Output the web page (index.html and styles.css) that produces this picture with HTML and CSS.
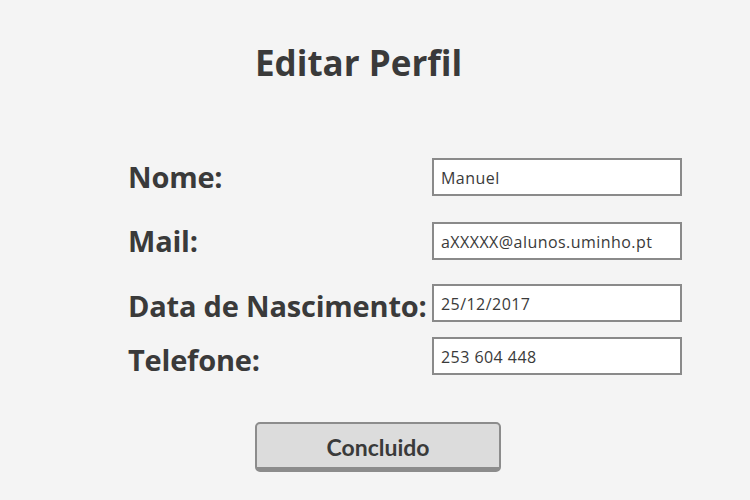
FILE: index.html
```html
<!DOCTYPE html>
<html lang="pt">
<head>
<meta charset="utf-8">
<title>Editar Perfil</title>
<link rel="stylesheet" href="styles.css">
</head>
<body>
<main class="page">
  <h1 class="title">Editar Perfil</h1>
  <form class="form">
    <div class="row row-nome">
      <label class="label" for="nome">Nome:</label>
      <input class="field" id="nome" type="text" value="Manuel">
    </div>
    <div class="row row-mail">
      <label class="label" for="mail">Mail:</label>
      <input class="field" id="mail" type="text" value="aXXXXX@alunos.uminho.pt">
    </div>
    <div class="row row-data">
      <label class="label" for="data">Data de Nascimento:</label>
      <input class="field" id="data" type="text" value="25/12/2017">
    </div>
    <div class="row row-tel">
      <label class="label" for="tel">Telefone:</label>
      <input class="field" id="tel" type="text" value="253 604 448">
    </div>
    <div class="actions">
      <button class="btn" type="button">Concluido</button>
    </div>
  </form>
</main>
</body>
</html>
```

FILE: styles.css
```css
html, body {
  margin: 0;
  padding: 0;
  background: #f4f4f4;
}
body {
  width: 750px;
  height: 500px;
  overflow: hidden;
  font-family: "Open Sans", Lato, sans-serif;
  color: #3a3a3a;
}
.page {
  display: flex;
  flex-direction: column;
}
.title {
  margin: 41px 0 0 255px;
  font-size: 35px;
  font-weight: 700;
  line-height: 44px;
  height: 44px;
  letter-spacing: 0;
}
.form {
  display: flex;
  flex-direction: column;
  margin: 73px 0 0 128px;
}
.row {
  display: grid;
  grid-template-columns: 304px 250px;
  grid-template-rows: 38px;
  align-items: center;
  height: 38px;
}
.row-mail { margin-top: 26px; }
.row-data { margin-top: 24px; }
.row-tel { margin-top: 15px; }
.label {
  font-size: 29px;
  font-weight: 700;
  line-height: 38px;
  white-space: nowrap;
  letter-spacing: -0.2px;
}
.row-data .label { align-self: end; line-height: 32px; }
.row-tel .label { align-self: end; line-height: 30px; }
.field {
  box-sizing: border-box;
  width: 250px;
  height: 38px;
  border: 2px solid #8a8a8a;
  background: #ffffff;
  padding: 1px 0 0 7px;
  font-family: "Open Sans", sans-serif;
  font-size: 16px;
  font-weight: 500;
  letter-spacing: 0.45px;
  color: #3a3a3a;
  outline: none;
}
.actions {
  margin: 47px 0 0 127px;
}
.btn {
  box-sizing: border-box;
  width: 246px;
  height: 50px;
  background: #dcdcdc;
  border: 2px solid #8c8c8c;
  border-bottom-width: 5px;
  border-radius: 5px;
  font-family: Lato, "Open Sans", sans-serif;
  font-size: 23px;
  font-weight: 700;
  color: #3a3a3a;
  padding: 2px 0 0;
}
```
